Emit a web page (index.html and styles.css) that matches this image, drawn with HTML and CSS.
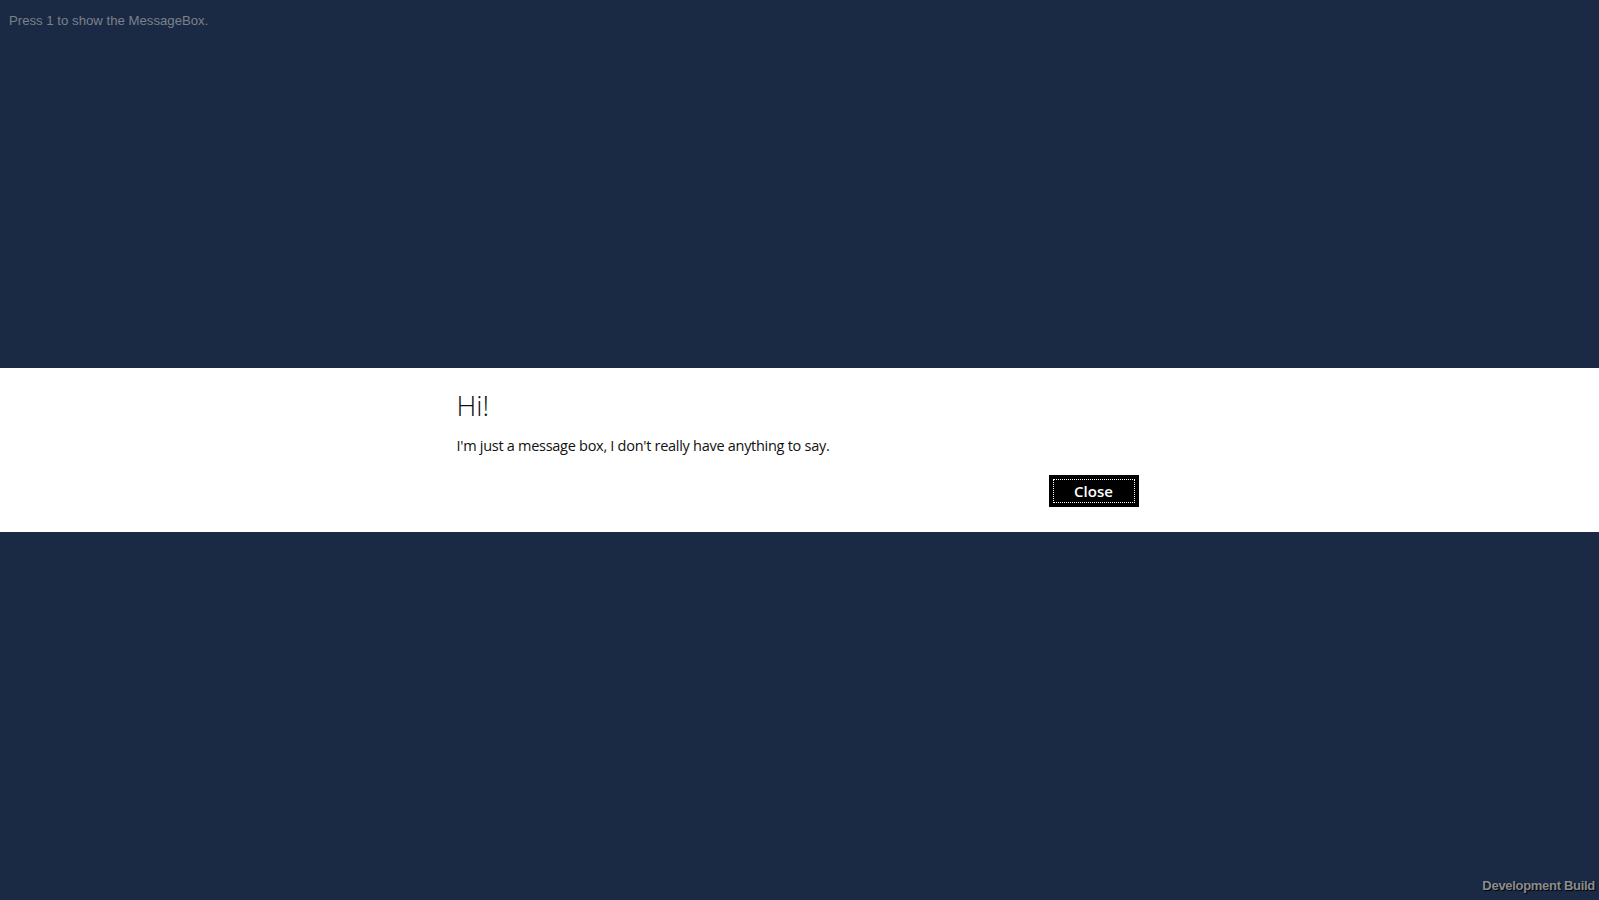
FILE: index.html
```html
<!DOCTYPE html>
<html>
<head>
<meta charset="utf-8">
<link rel="stylesheet" href="styles.css">
</head>
<body>
<div class="page">
  <div class="top">
    <div class="hint">Press 1 to show the MessageBox.</div>
  </div>
  <div class="band">
    <div class="box">
      <h1 class="title">Hi!</h1>
      <p class="msg">I'm just a message box, I don't really have anything to say.</p>
      <div class="actions">
        <button class="btn"><span class="focus">Close</span></button>
      </div>
    </div>
  </div>
  <div class="rest"></div>
  <div class="build">Development Build</div>
</div>
</body>
</html>
```
FILE: styles.css
```css
html, body {
  margin: 0;
  padding: 0;
  background: #1b2a44;
}
.page {
  position: relative;
  width: 1599px;
  height: 900px;
  display: flex;
  flex-direction: column;
  overflow: hidden;
}
.top {
  height: 368px;
  box-sizing: border-box;
  padding: 13px 9px 0;
}
.hint {
  font-family: "Liberation Sans", Arial, sans-serif;
  font-size: 13.2px;
  line-height: 15px;
  color: #7c818a;
}
.band {
  height: 164px;
  background: #ffffff;
  box-sizing: border-box;
  padding: 19px 4px 0 0;
}
.box {
  width: 682px;
  margin: 0 auto;
  font-family: "Open Sans", "Noto Sans", sans-serif;
  color: #000;
}
.title {
  margin: 0;
  font-size: 27.5px;
  font-weight: 300;
  line-height: 38px;
  color: #111;
}
.msg {
  margin: 11px 0 0;
  font-size: 14.5px;
  font-weight: 400;
  letter-spacing: -0.28px;
  line-height: 20px;
  color: #111;
}
.actions {
  margin-top: 19px;
  display: flex;
  justify-content: flex-end;
}
.btn {
  width: 90px;
  height: 32px;
  margin: 0;
  padding: 4px;
  border: none;
  background: #000;
  box-sizing: border-box;
  display: flex;
}
.focus {
  flex: 1;
  border: 1px dotted #ffffff;
  color: #fff;
  font-family: "Open Sans", "Noto Sans", sans-serif;
  font-weight: 600;
  font-size: 15px;
  display: flex;
  align-items: center;
  justify-content: center;
}
.rest {
  flex: 1;
}
.build {
  position: absolute;
  right: 4px;
  bottom: 7px;
  font-family: "Liberation Sans", Arial, sans-serif;
  font-weight: bold;
  font-size: 13px;
  letter-spacing: -0.3px;
  line-height: 14px;
  color: #8a8d92;
  text-shadow: 1px 1px 1px #000;
}
```
